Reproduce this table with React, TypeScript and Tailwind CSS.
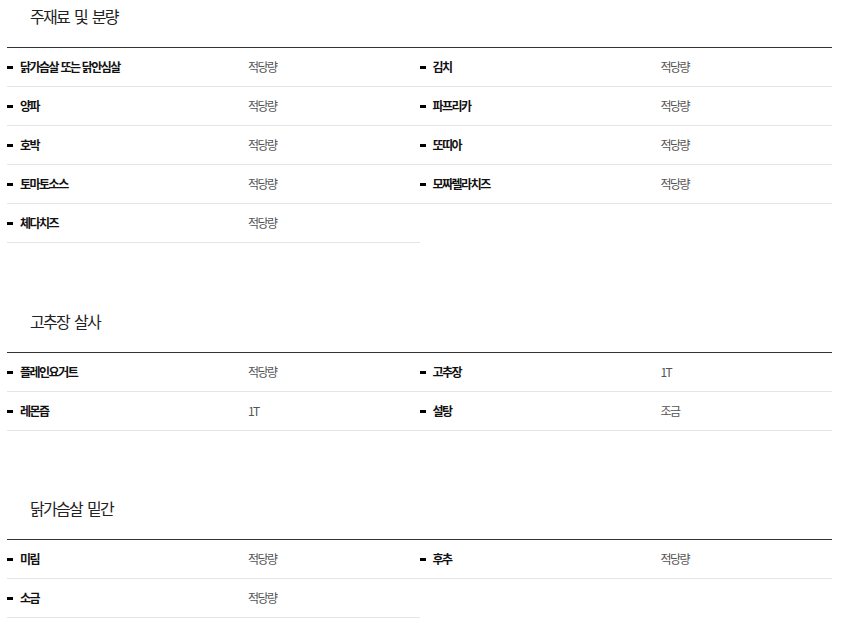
import React from "react";

type Item = { name: string; amount: string };

const sections: { title: string; gap: string; items: Item[] }[] = [
  {
    title: "주재료 및 분량",
    gap: "",
    items: [
      { name: "닭가슴살 또는 닭안심살", amount: "적당량" },
      { name: "김치", amount: "적당량" },
      { name: "양파", amount: "적당량" },
      { name: "파프리카", amount: "적당량" },
      { name: "호박", amount: "적당량" },
      { name: "또띠아", amount: "적당량" },
      { name: "토마토소스", amount: "적당량" },
      { name: "모짜렐라치즈", amount: "적당량" },
      { name: "체다치즈", amount: "적당량" },
    ],
  },
  {
    title: "고추장 살사",
    gap: "mt-[62px]",
    items: [
      { name: "플레인요거트", amount: "적당량" },
      { name: "고추장", amount: "1T" },
      { name: "레몬즙", amount: "1T" },
      { name: "설탕", amount: "조금" },
    ],
  },
  {
    title: "닭가슴살 밑간",
    gap: "mt-[61px]",
    items: [
      { name: "미림", amount: "적당량" },
      { name: "후추", amount: "적당량" },
      { name: "소금", amount: "적당량" },
    ],
  },
];

const font = { fontFamily: "'Noto Sans CJK KR', 'Noto Sans', sans-serif" };

function Row({ item }: { item: Item }) {
  return (
    <li className="flex h-[39px] items-center border-b border-[#e5e5e5]">
      <span className="mr-[7px] h-[3px] w-[6px] shrink-0 bg-black" />
      <span className="w-[228px] shrink-0 text-[12px] font-bold tracking-[-1.5px] [word-spacing:1px] text-[#111]">
        {item.name}
      </span>
      <span className="text-[12px] tracking-[-1.6px] text-[#555]">{item.amount}</span>
    </li>
  );
}

export default function App() {
  return (
    <div className="w-[841px] bg-white pl-[7px] pr-[9px]" style={font}>
      {sections.map((s) => (
        <section key={s.title} className={s.gap}>
          <h3 className="flex h-[47px] items-start pl-[23px] pt-[4px] text-[16px] leading-[24px] tracking-[-1.7px] [word-spacing:3px] text-[#222]">
            {s.title}
          </h3>
          <ul className="grid grid-cols-2 border-t border-[#333]">
            {s.items.map((it) => (
              <Row key={it.name} item={it} />
            ))}
          </ul>
        </section>
      ))}
    </div>
  );
}
